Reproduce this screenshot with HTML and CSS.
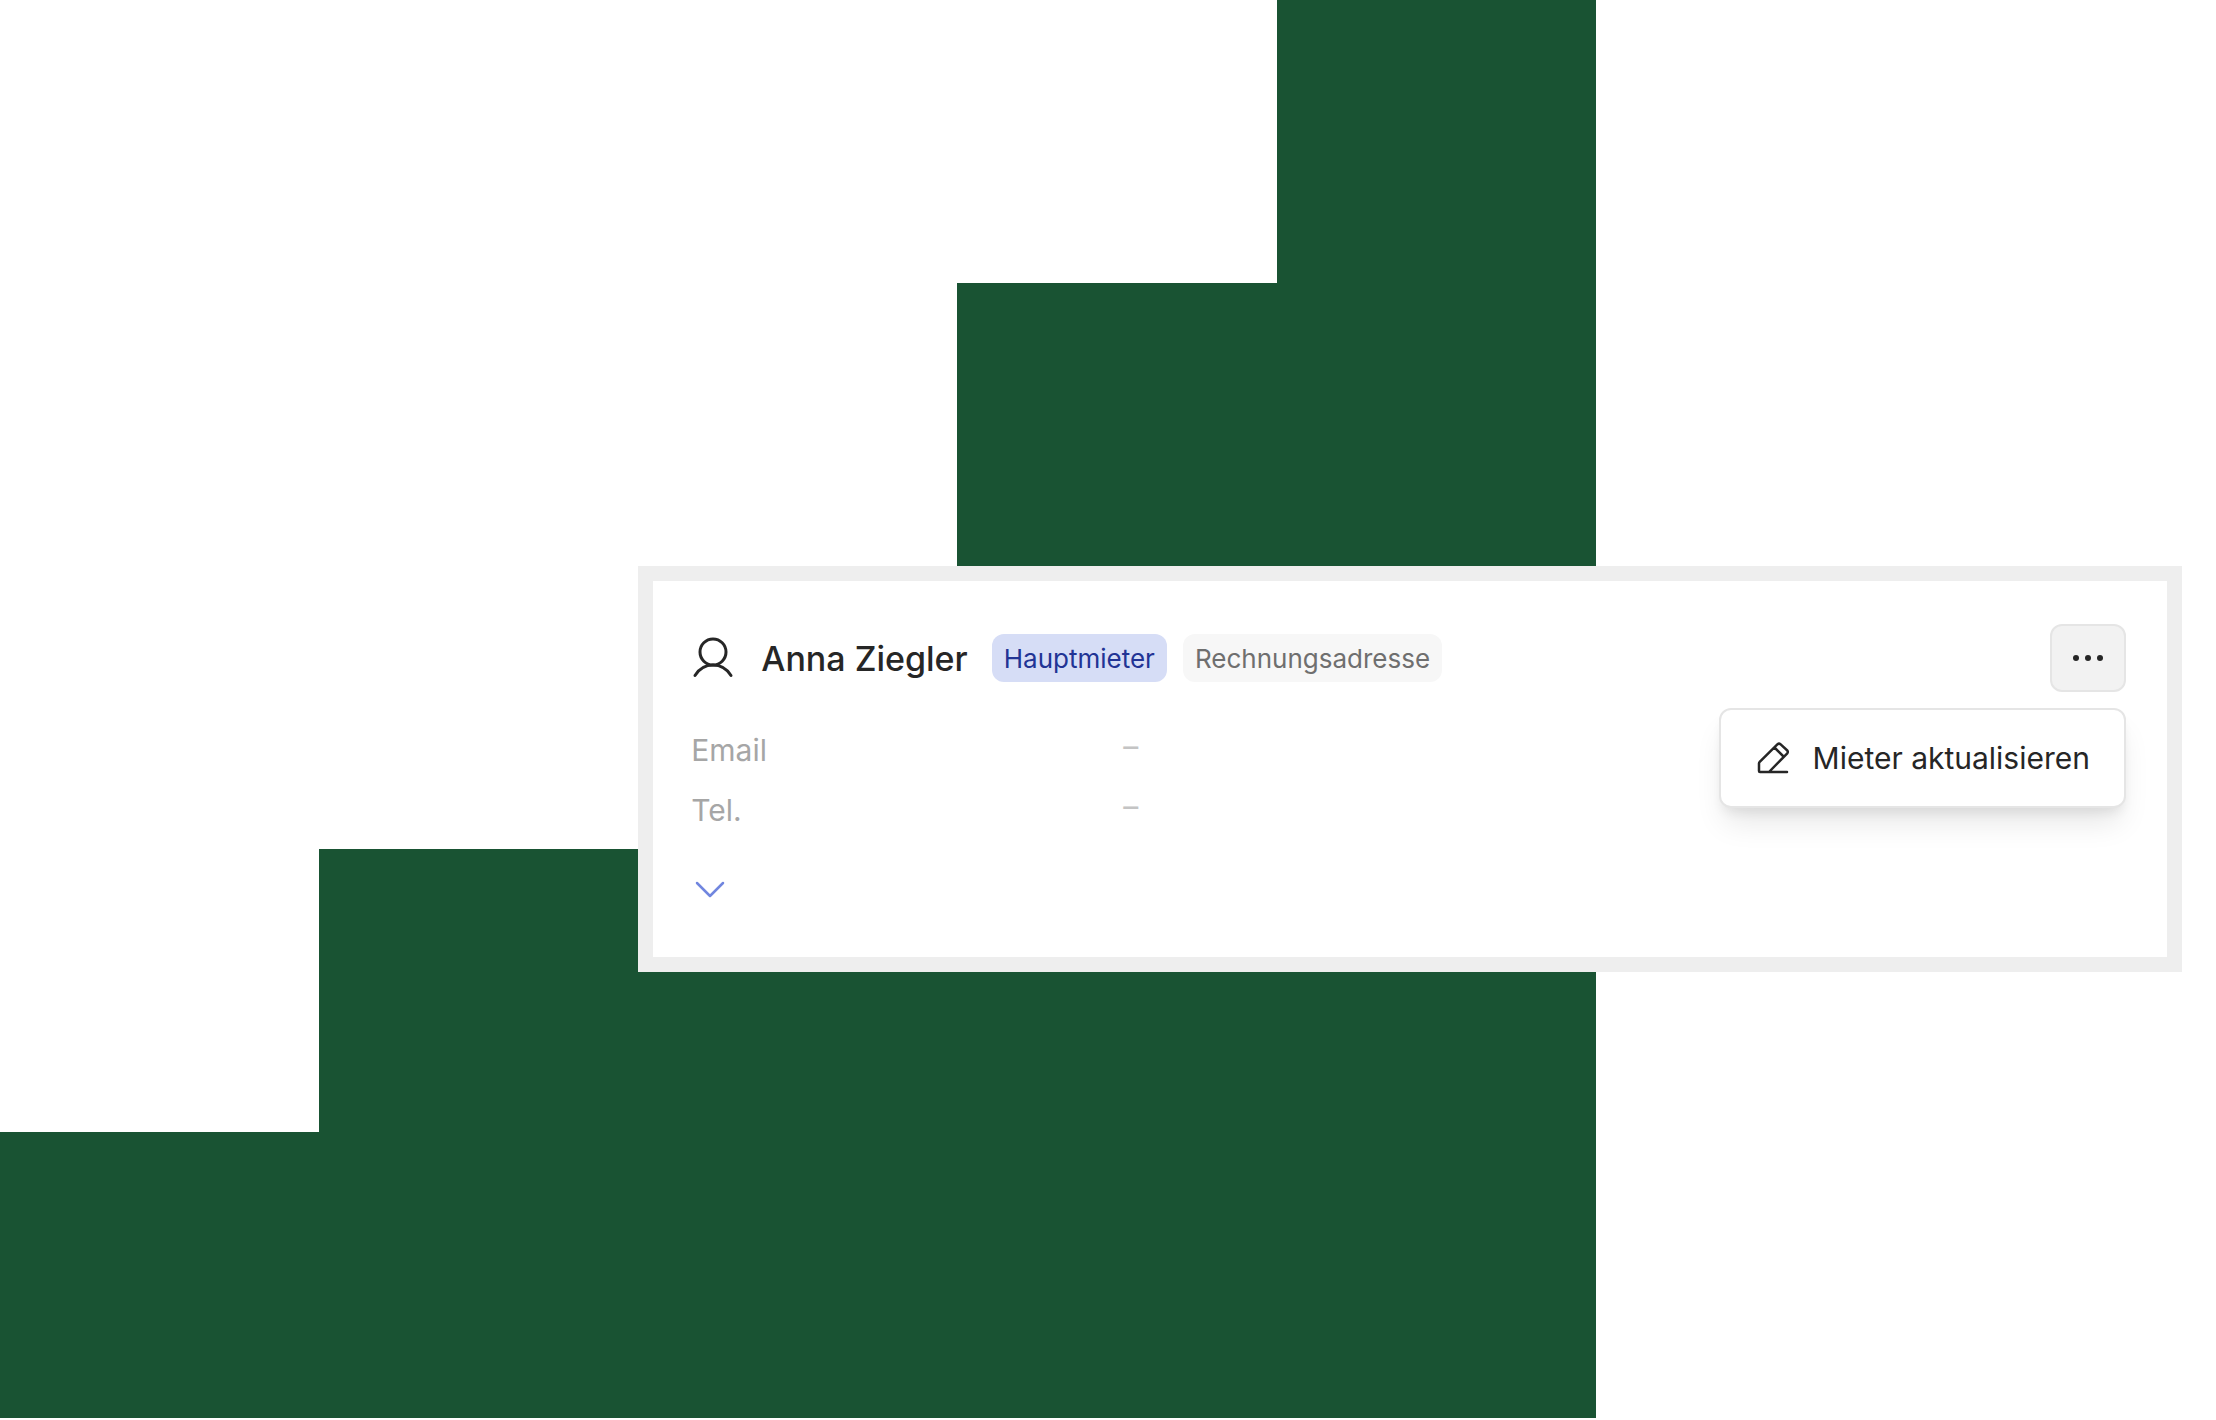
FILE: index.html
```html
<!DOCTYPE html>
<html lang="de">
<head>
  <meta charset="UTF-8" />
  <meta name="viewport" content="width=device-width, initial-scale=1.0"/>
  <title>Mieter</title>
  <link rel="stylesheet" href="styles.css">
</head>
<body>

  <main class="stage">
    <!-- Stairs -->
    <div class="step step-1"></div>
    <div class="step step-2"></div>
    <div class="step step-3"></div>
    <div class="step step-4"></div>
    <div class="step step-5"></div>

    <!-- Tenant card -->
    <section class="card">
      <header class="card-header">
        <svg class="icon-user" viewBox="0 0 44 44" aria-hidden="true">
          <circle cx="22" cy="16" r="13"/>
          <path d="M4 39.500C8 33 14.500 29 22 29S36 33 40 39.500"/>
        </svg>
        <h1 class="name">Anna Ziegler</h1>
        <div class="tags">
          <span class="tag tag-blue">Hauptmieter</span>
          <span class="tag">Rechnungsadresse</span>
        </div>
        <div class="menu">
          <button class="menu-button" type="button" aria-label="Aktionen" aria-expanded="true">
            <svg class="icon-dots" viewBox="0 0 32 8" aria-hidden="true">
              <circle cx="4" cy="4" r="3"/>
              <circle cx="16" cy="4" r="3"/>
              <circle cx="28" cy="4" r="3"/>
            </svg>
          </button>
          <div class="dropdown">
            <button class="dropdown-item" type="button">
              <svg class="icon-edit" viewBox="0 0 32 32" aria-hidden="true">
                <path d="M30 30H3Q2 30 2 29V21.500Q2 20.500 2.700 19.800L20.600 2.200Q22 1 23.400 2.200L30.300 8.500Q31.300 9.900 30.300 11.300L12 30M17.500 5.500L26.500 14.500"/>
              </svg>
              Mieter aktualisieren
            </button>
          </div>
        </div>
      </header>

      <dl class="details">
        <dt>Email</dt>
        <dd>–</dd>
        <dt>Tel.</dt>
        <dd>–</dd>
      </dl>

      <button class="toggle" type="button" aria-label="Mehr anzeigen">
        <svg class="icon-chevron" viewBox="0 0 32 18" aria-hidden="true">
          <path d="M3 2L16 15L29 2"/>
        </svg>
      </button>
    </section>
  </main>

</body>
</html>
```
FILE: styles.css
```css
* { box-sizing: border-box; }
body {
  margin: 0;
  font-family: Inter, "Noto Sans", sans-serif;
  background: #fff;
  color: #262626;
}
button {
  font: inherit;
  color: inherit;
  cursor: pointer;
}
svg {
  display: block;
  flex: none;
  fill: none;
  stroke: currentColor;
  stroke-linecap: round;
  stroke-linejoin: round;
}

/* stairs: five columns, five rows, card starts at the third of each */
.stage {
  display: grid;
  grid-template-columns: repeat(5, 319fr) 586fr 34fr;
  grid-template-rows: repeat(4, minmax(0, 283fr)) minmax(0, 286fr);
  min-height: 100vh;
  padding-bottom: 2px;
}
.step { background: #195333; }
.step-1 { grid-area: 5 / 1 / 6 / 2; }
.step-2 { grid-area: 4 / 2 / 6 / 3; }
.step-3 { grid-area: 3 / 3 / 6 / 4; }
.step-4 { grid-area: 2 / 4 / 6 / 5; }
.step-5 { grid-area: 1 / 5 / 6 / 6; }

.card {
  grid-area: 3 / 3 / 5 / 7;
  align-self: start;
  padding: 43px 41px 47px 38px;
  background: #fff;
  border: 15px solid #eee;
}
.card-header {
  display: flex;
  align-items: center;
}
.icon-user {
  width: 44px;
  height: 44px;
  margin-right: 26px;
  stroke-width: 3;
}
.name {
  margin: 0 24px 0 0;
  padding-top: 2px;
  font-size: 34px;
  font-weight: 500;
  line-height: 48px;
}
.tags {
  display: flex;
  gap: 16px;
}
.tag {
  padding: 2px 12px 0;
  font-size: 26px;
  line-height: 46px;
  border-radius: 12px;
  background: #f7f7f7;
  color: #6f6f6f;
}
.tag-blue {
  background: #d6ddf6;
  color: #223495;
}

.menu {
  position: relative;
  margin-left: auto;
}
.menu-button {
  display: flex;
  align-items: center;
  justify-content: center;
  width: 76px;
  height: 68px;
  padding: 0;
  border: 2px solid #e5e5e5;
  border-radius: 12px;
  background: #f2f2f2;
}
.icon-dots {
  width: 32px;
  height: 8px;
  fill: currentColor;
  stroke: none;
}
.dropdown {
  position: absolute;
  top: 100%;
  right: 0;
  margin-top: 16px;
  padding: 8px;
  border: 2px solid #e5e5e5;
  border-radius: 12px;
  background: #fff;
  box-shadow: 0 20px 30px -6px rgba(0, 0, 0, 0.1), 0 8px 12px -4px rgba(0, 0, 0, 0.08);
}
.dropdown-item {
  display: flex;
  align-items: center;
  gap: 24px;
  padding: 0 26px 0 28px;
  border: none;
  background: none;
  font-size: 30px;
  line-height: 80px;
  white-space: nowrap;
}
.icon-edit {
  width: 32px;
  height: 32px;
  stroke-width: 2.5;
}

.details {
  display: grid;
  grid-template-columns: 432px 1fr;
  margin: 28px 0 0;
  font-size: 30px;
  line-height: 60px;
}
.details dt { color: #a6a6a6; }
.details dd {
  margin: 0;
  color: #c4c4c4;
  line-height: 52px;
}

.toggle {
  display: flex;
  align-items: center;
  height: 40px;
  margin-top: 30px;
  padding: 0 3px;
  border: none;
  background: none;
  color: #7186df;
}
.icon-chevron {
  width: 32px;
  height: 18px;
  stroke-width: 2.5;
}
```
